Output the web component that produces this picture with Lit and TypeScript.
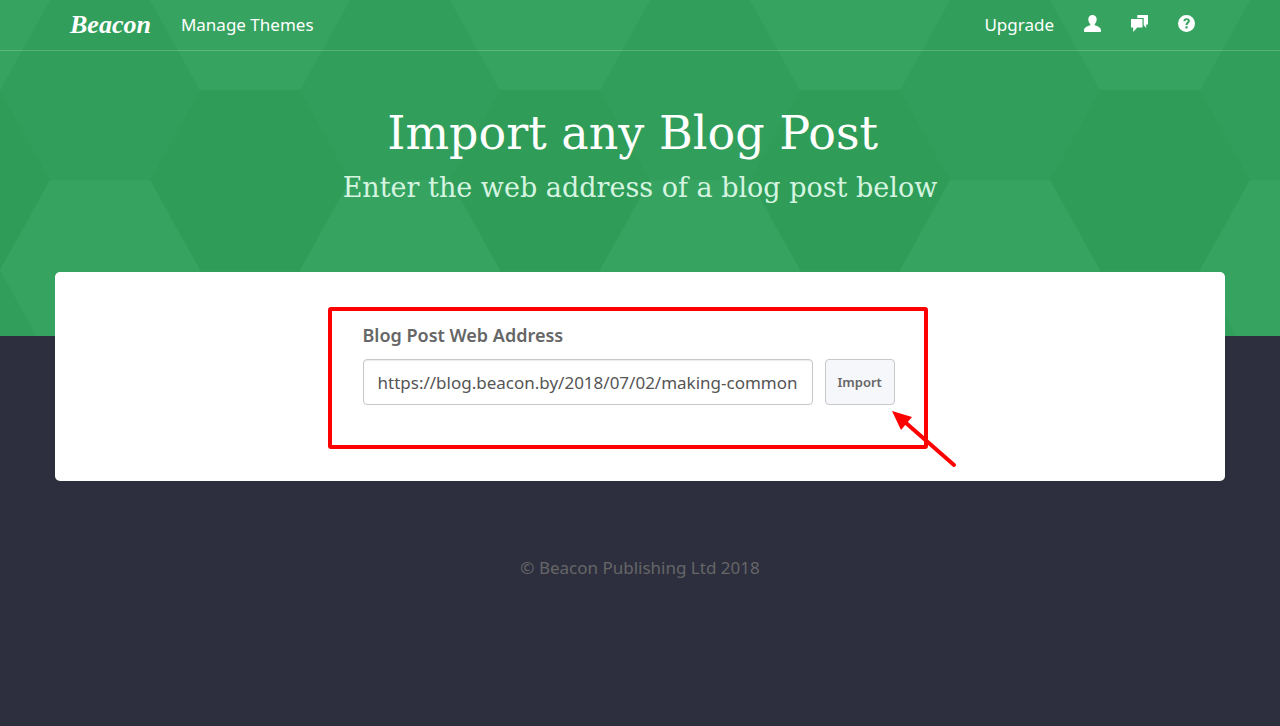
import { LitElement, html, css, svg } from "lit";
import { customElement } from "lit/decorators.js";

const hex = (cx: number, cy: number, tone: string) => svg`
  <polygon class=${tone} points="${cx - 100},${cy} ${cx - 50},${cy - 90} ${cx + 50},${cy - 90} ${cx + 100},${cy} ${cx + 50},${cy + 90} ${cx - 50},${cy + 90}"></polygon>`;

@customElement("app-root")
export class AppRoot extends LitElement {
  static styles = css`
    :host {
      display: block;
      min-height: 100vh;
      background: #2d2f3f;
      color: #666;
      font-family: "Noto Sans", sans-serif;
      font-size: 17px;
      line-height: 24px;
    }
    * {
      box-sizing: border-box;
    }
    .hero {
      position: relative;
      background: #319f5b;
      padding-bottom: 126px;
    }
    .pattern {
      position: absolute;
      inset: 0;
      width: 100%;
      height: 100%;
    }
    .light {
      fill: #37a360;
    }
    .dark {
      fill: #2f9c58;
    }
    .bar {
      position: relative;
      border-bottom: 1px solid rgba(255, 255, 255, 0.2);
    }
    .container {
      max-width: 1170px;
      margin: 0 auto;
    }
    .nav {
      display: flex;
      align-items: center;
      height: 50px;
      padding: 0 30px 0 15px;
      gap: 30px;
    }
    .nav a {
      color: #fff;
      text-decoration: none;
    }
    .nav .logo {
      font: italic bold 26px/32px "Liberation Serif", serif;
    }
    .tools {
      display: flex;
      align-items: center;
      gap: 30px;
      margin-left: auto;
    }
    .icon {
      display: block;
      width: 17px;
      height: 17px;
      margin-bottom: 4px;
      fill: #fff;
    }
    .titles {
      position: relative;
      padding-top: 52px;
      text-align: center;
      font-family: "DejaVu Serif", serif;
    }
    h1,
    h2 {
      margin: 0;
      font-weight: 400;
    }
    h1 {
      color: #fff;
      font-size: 46px;
      line-height: 60px;
    }
    h2 {
      margin-top: 2px;
      color: #d5f5e1;
      font-size: 27px;
      line-height: 45px;
    }
    .card {
      position: relative;
      margin-top: -64px;
      padding: 50px 15px 76px;
      background: #fff;
      border-radius: 5px;
    }
    form {
      position: relative;
      max-width: 555px;
      margin: 0 auto;
    }
    label {
      display: block;
      margin-bottom: 10px;
      font-size: 18px;
      line-height: 27px;
      font-weight: 600;
    }
    .row {
      display: flex;
      gap: 12px;
    }
    input,
    button {
      height: 46px;
      border: 1px solid #c8c8c8;
      border-radius: 4px;
      font-family: inherit;
    }
    input {
      width: 450px;
      min-width: 0;
      padding: 0 14px;
      color: #555;
      background: #fff;
      font-size: 17px;
      box-shadow: inset 0 1px 1px rgba(0, 0, 0, 0.08);
    }
    button {
      padding: 0 12px;
      color: #666;
      background: #f5f7fa;
      font-size: 13px;
      font-weight: 600;
    }
    .marker {
      position: absolute;
      left: -35px;
      top: -15px;
      width: 632px;
      height: 164px;
      pointer-events: none;
      fill: none;
      stroke: #f00;
      stroke-width: 4;
    }
    .head {
      fill: #f00;
      stroke: none;
    }
    footer {
      padding: 75px 15px;
      text-align: center;
    }
  `;

  render() {
    return html`
      <header class="hero">
        <svg class="pattern" aria-hidden="true">
          <defs>
            <pattern id="hexes" width="300" height="360" patternUnits="userSpaceOnUse">
              ${hex(100, 270, "light")} ${hex(250, 0, "light")} ${hex(-50, 0, "light")}
              ${hex(250, 180, "dark")} ${hex(-50, 180, "dark")}
            </pattern>
          </defs>
          <rect width="100%" height="100%" fill="url(#hexes)"></rect>
        </svg>
        <div class="bar">
          <nav class="container nav">
            <a class="logo" href="#">Beacon</a>
            <a href="#">Manage Themes</a>
            <div class="tools">
              <a href="#">Upgrade</a>
              <a href="#" aria-label="Account">
                <svg class="icon" viewBox="0 0 17 17">
                  <path d="M8.500 0C6 0 4.300 1.700 4.300 4.300C4.300 6.400 5.200 8.100 6.300 9V10.300C4.500 11 0 12 0 15.300V16.300Q0 17 .7 17H16.300Q17 17 17 16.300V15.300C17 12 12.500 11 10.700 10.300V9C11.800 8.100 12.700 6.400 12.700 4.300C12.700 1.700 11 0 8.500 0Z"></path>
                </svg>
              </a>
              <a href="#" aria-label="Messages">
                <svg class="icon" viewBox="0 0 17 17">
                  <path d="M6.300 0H17V9.500H15.200V13L12.700 10.200V3H6.300Z"></path>
                  <path d="M0 4H11.500V12.500H6.200L2.200 17V12.500H0Z"></path>
                </svg>
              </a>
              <a href="#" aria-label="Help">
                <svg class="icon" viewBox="0 0 17 17">
                  <path fill-rule="evenodd" d="M8.500 0A8.500 8.500 0 1 1 8.500 17A8.500 8.500 0 1 1 8.500 0ZM5.400 6.300H7.500C7.500 5.500 7.900 5 8.600 5C9.300 5 9.700 5.400 9.700 6C9.700 7.300 7.500 7.400 7.500 10H9.500C9.500 8.300 11.900 8 11.900 5.900C11.900 4.200 10.500 3.200 8.700 3.200C6.700 3.200 5.400 4.400 5.400 6.300ZM7.400 11.300V13.500H9.600V11.300Z"></path>
                </svg>
              </a>
            </div>
          </nav>
        </div>
        <div class="titles">
          <h1>Import any Blog Post&nbsp;</h1>
          <h2>Enter the web address of a blog post below</h2>
        </div>
      </header>
      <main class="container card">
        <form @submit=${(e: Event) => e.preventDefault()}>
          <label for="address">Blog Post Web Address</label>
          <div class="row">
            <input id="address" type="text" value="https://blog.beacon.by/2018/07/02/making-common-mistakes" />
            <button type="submit">Import</button>
          </div>
          <svg class="marker" viewBox="0 0 632 164" aria-hidden="true">
            <rect x="2" y="2" width="596" height="138" rx="1"></rect>
            <path d="M578 116L626 158" stroke-linecap="round"></path>
            <path class="head" d="M564 104L584 110L573 123Z"></path>
          </svg>
        </form>
      </main>
      <footer>© Beacon Publishing Ltd 2018</footer>
    `;
  }
}
